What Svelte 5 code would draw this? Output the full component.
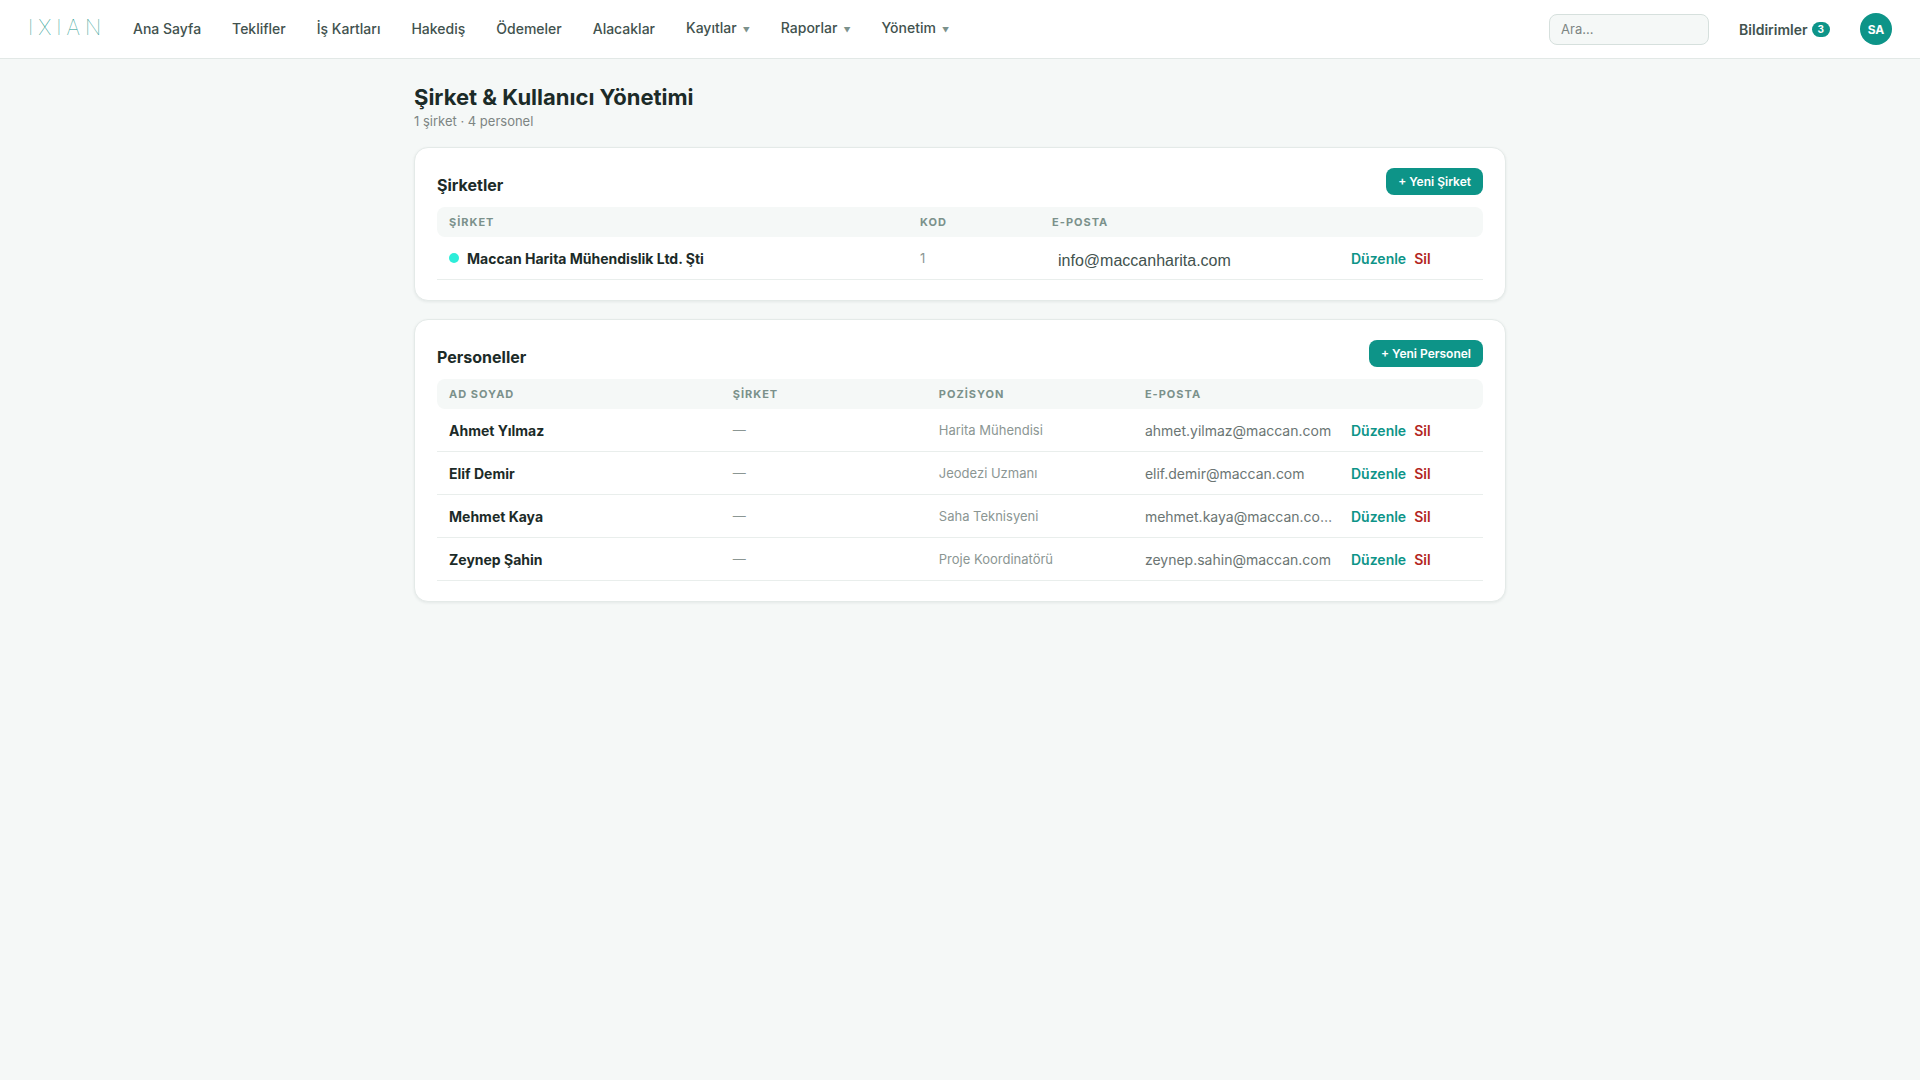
<script lang="ts">
	interface NavItem {
		label: string;
		menu?: boolean;
	}

	const navItems: NavItem[] = [
		{ label: "Ana Sayfa" },
		{ label: "Teklifler" },
		{ label: "İş Kartları" },
		{ label: "Hakediş" },
		{ label: "Ödemeler" },
		{ label: "Alacaklar" },
		{ label: "Kayıtlar", menu: true },
		{ label: "Raporlar", menu: true },
		{ label: "Yönetim", menu: true },
	];

	const companies = [
		{ name: "Maccan Harita Mühendislik Ltd. Şti", code: "1", email: "info@maccanharita.com" },
	];

	const people = [
		{ name: "Ahmet Yılmaz", company: "—", position: "Harita Mühendisi", email: "ahmet.yilmaz@maccan.com" },
		{ name: "Elif Demir", company: "—", position: "Jeodezi Uzmanı", email: "elif.demir@maccan.com" },
		{ name: "Mehmet Kaya", company: "—", position: "Saha Teknisyeni", email: "mehmet.kaya@maccan.co…" },
		{ name: "Zeynep Şahin", company: "—", position: "Proje Koordinatörü", email: "zeynep.sahin@maccan.com" },
	];

	let search = $state("");
</script>

{#snippet actions()}
	<td class="actions">
		<button class="link">Düzenle</button>
		<button class="link danger">Sil</button>
	</td>
{/snippet}

<header class="topbar">
	<a class="logo" href="#top">IXIAN</a>
	<nav class="nav">
		{#each navItems as item}
			{#if item.menu}
				<button class="nav-item">{item.label}<span class="caret">▼</span></button>
			{:else}
				<a class="nav-item" href="#top">{item.label}</a>
			{/if}
		{/each}
	</nav>
	<div class="tools">
		<input class="search" type="search" placeholder="Ara..." aria-label="Ara" bind:value={search} />
		<button class="notifications">Bildirimler<span class="badge">3</span></button>
		<button class="avatar">SA</button>
	</div>
</header>

<main class="page">
	<h1>Şirket &amp; Kullanıcı Yönetimi</h1>
	<p class="summary">{companies.length} şirket · {people.length} personel</p>

	<section class="card">
		<div class="card-head">
			<h2>Şirketler</h2>
			<button class="primary">+ Yeni Şirket</button>
		</div>
		<table class="companies">
			<thead>
				<tr><th>ŞİRKET</th><th>KOD</th><th>E-POSTA</th><th></th></tr>
			</thead>
			<tbody>
				{#each companies as company}
					<tr>
						<td class="name"><span class="dot"></span>{company.name}</td>
						<td class="muted">{company.code}</td>
						<td class="contact">{company.email}</td>
						{@render actions()}
					</tr>
				{/each}
			</tbody>
		</table>
	</section>

	<section class="card">
		<div class="card-head">
			<h2>Personeller</h2>
			<button class="primary">+ Yeni Personel</button>
		</div>
		<table class="people">
			<thead>
				<tr><th>AD SOYAD</th><th>ŞİRKET</th><th>POZİSYON</th><th>E-POSTA</th><th></th></tr>
			</thead>
			<tbody>
				{#each people as person}
					<tr>
						<td class="name">{person.name}</td>
						<td class="muted">{person.company}</td>
						<td class="muted">{person.position}</td>
						<td class="email">{person.email}</td>
						{@render actions()}
					</tr>
				{/each}
			</tbody>
		</table>
	</section>
</main>

<style>
	:global(body) {
		background: #f5f8f7;
		color: #1c2b28;
		font-family: Inter, "Open Sans", sans-serif;
		font-size: 14px;
	}

	button,
	input {
		font: inherit;
		color: inherit;
		box-sizing: border-box;
	}

	button {
		padding: 0;
		border: none;
		background: none;
		cursor: pointer;
	}

	.topbar {
		display: flex;
		align-items: center;
		height: 58px;
		padding: 0 28px;
		background: #fff;
		border-bottom: 1px solid #e2e8e6;
	}

	.logo {
		width: 105px;
		padding-bottom: 3px;
		font-size: 21px;
		font-weight: 100;
		letter-spacing: 5px;
		color: #0d9488;
		text-decoration: none;
	}

	.nav {
		display: flex;
		align-items: center;
		gap: 31px;
	}

	.nav-item {
		font-weight: 500;
		line-height: 22px;
		color: #42524e;
		text-decoration: none;
		white-space: nowrap;
	}

	.caret {
		margin-left: 6px;
		font-size: 7px;
		color: #7b918b;
	}

	.tools {
		display: flex;
		align-items: center;
		gap: 30px;
		margin-left: auto;
	}

	.search {
		width: 160px;
		height: 31px;
		padding: 0 11px;
		border: 1px solid #d6e0dd;
		border-radius: 8px;
		background: #f5f8f7;
		font-size: 13px;
		outline: none;
	}

	.search::placeholder {
		color: #7d8583;
	}

	.notifications {
		display: flex;
		align-items: center;
		gap: 4px;
		font-weight: 600;
		color: #42524e;
	}

	.badge {
		padding: 0 6px;
		border-radius: 8px;
		background: #0d9488;
		color: #fff;
		font-size: 10px;
		font-weight: 700;
		line-height: 15px;
	}

	.avatar {
		width: 32px;
		height: 32px;
		border-radius: 50%;
		background: #0d9488;
		color: #fff;
		font-size: 12px;
		font-weight: 700;
	}

	.page {
		box-sizing: border-box;
		max-width: 1140px;
		margin: 0 auto;
		padding: 24px;
	}

	h1 {
		margin: 0;
		font-size: 22px;
		font-weight: 700;
		line-height: 28px;
	}

	.summary {
		margin: 1px 0 17px;
		font-size: 13px;
		line-height: 18px;
		color: #7d8583;
	}

	.card {
		margin-bottom: 18px;
		padding: 20px 22px;
		border: 1px solid #e4eae8;
		border-radius: 14px;
		background: #fff;
		box-shadow: 0 1px 3px rgba(20, 50, 45, 0.08);
	}

	.card-head {
		display: flex;
		align-items: flex-end;
		justify-content: space-between;
		margin-bottom: 12px;
	}

	h2 {
		margin: 0;
		font-size: 16px;
		font-weight: 700;
		line-height: 20px;
	}

	.primary {
		height: 27px;
		padding: 0 12px;
		border-radius: 8px;
		background: #0d9488;
		color: #fff;
		font-size: 12px;
		font-weight: 600;
	}

	table,
	thead,
	tbody {
		display: block;
	}

	tr {
		display: grid;
		align-items: center;
		column-gap: 12px;
		padding: 0 12px;
	}

	.companies tr {
		grid-template-columns: 1.6fr 120px 1fr 120px;
	}

	.people tr {
		grid-template-columns: 1.4fr 1fr 1fr 1fr 120px;
	}

	thead tr {
		height: 30px;
		border-radius: 8px;
		background: #f5f8f7;
	}

	tbody tr {
		height: 42px;
		border-bottom: 1px solid #e9eeec;
	}

	th,
	td {
		min-width: 0;
		padding: 0;
		text-align: left;
		white-space: nowrap;
	}

	th {
		font-size: 11px;
		font-weight: 700;
		letter-spacing: 1px;
		color: #7b918b;
	}

	.name {
		display: flex;
		align-items: center;
		gap: 8px;
		font-weight: 700;
	}

	.dot {
		width: 10px;
		height: 10px;
		border-radius: 50%;
		background: #2dedd9;
	}

	.muted {
		font-size: 13px;
		color: #8b9693;
	}

	.email {
		overflow: hidden;
		text-overflow: ellipsis;
		color: #6b7573;
	}

	.contact {
		padding: 6px 0 0 6px;
		font-family: "Liberation Sans", Arial, sans-serif;
		font-size: 16px;
		color: #42524e;
	}

	.actions {
		display: flex;
		gap: 8px;
	}

	.link {
		font-weight: 600;
		color: #0d9488;
	}

	.link.danger {
		color: #b3261e;
	}
</style>
